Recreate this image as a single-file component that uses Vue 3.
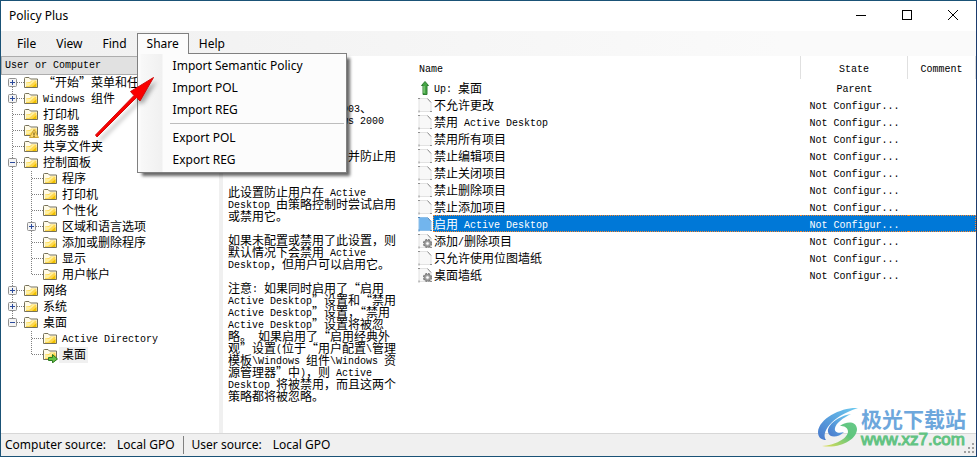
<script setup>
import { h, ref } from 'vue'

// Latin runs are set in a half-width monospace next to full-width CJK glyphs.
const Mixed = (props) =>
  h('span', { class: 'mixed' }, props.text.split(/([\x20-\x7e]+)/).filter(Boolean).map((part) =>
    /^[\x20-\x7e]/.test(part) ? h('span', { class: 'half' }, part) : part))
Mixed.props = ['text']

const menus = ['File', 'View', 'Find', 'Share', 'Help']
const imports = ['Import Semantic Policy', 'Import POL', 'Import REG']
const exportsList = ['Export POL', 'Export REG']

const tree = [
  { d: 0, e: '+', t: '“开始”菜单和任务栏', first: true },
  { d: 0, e: '+', t: 'Windows 组件' },
  { d: 0, t: '打印机' },
  { d: 0, t: '服务器', mark: 'warn' },
  { d: 0, t: '共享文件夹' },
  { d: 0, e: '-', t: '控制面板' },
  { d: 1, t: '程序', rail: true },
  { d: 1, t: '打印机', rail: true },
  { d: 1, t: '个性化', rail: true },
  { d: 1, e: '+', t: '区域和语言选项', rail: true },
  { d: 1, t: '添加或删除程序', rail: true },
  { d: 1, t: '显示', rail: true },
  { d: 1, t: '用户帐户', rail: true, last: true },
  { d: 0, e: '+', t: '网络' },
  { d: 0, e: '+', t: '系统' },
  { d: 0, e: '-', t: '桌面', last: true },
  { d: 1, t: 'Active Directory' },
  { d: 1, t: '桌面', last: true, mark: 'go', sel: true },
]

const description = [
  '仅 Windows Server 2003、',
  'Windows XP 或 Windows 2000',
  '',
  '',
  '启用 Active Desktop 并防止用',
  '',
  '',
  '此设置防止用户在 Active',
  'Desktop 由策略控制时尝试启用',
  '或禁用它。',
  '',
  '如果未配置或禁用了此设置，则',
  '默认情况下会禁用 Active',
  'Desktop，但用户可以启用它。',
  '',
  '注意: 如果同时启用了“启用',
  'Active Desktop”设置和“禁用',
  'Active Desktop”设置，“禁用',
  'Active Desktop”设置将被忽',
  '略。 如果启用了“启用经典外',
  '观”设置(位于“用户配置\\管理',
  '模板\\Windows 组件\\Windows 资',
  '源管理器”中)，则 Active',
  'Desktop 将被禁用，而且这两个',
  '策略都将被忽略。',
]

const nc = 'Not Configur...'
const rows = [
  { t: 'Up: 桌面', s: 'Parent', icon: 'up' },
  { t: '不允许更改', s: nc },
  { t: '禁用 Active Desktop', s: nc },
  { t: '禁用所有项目', s: nc },
  { t: '禁止编辑项目', s: nc },
  { t: '禁止关闭项目', s: nc },
  { t: '禁止删除项目', s: nc },
  { t: '禁止添加项目', s: nc },
  { t: '启用 Active Desktop', s: nc },
  { t: '添加/删除项目', s: nc, icon: 'gear' },
  { t: '只允许使用位图墙纸', s: nc },
  { t: '桌面墙纸', s: nc, icon: 'gear' },
]
const selected = ref(8)
</script>

<template>
  <div class="window">
    <header class="titlebar">
      <span class="title">Policy Plus</span>
      <div class="controls">
        <button type="button" aria-label="Minimize"><svg width="12" height="12"><path d="M1 6.5h10" /></svg></button>
        <button type="button" aria-label="Maximize"><svg width="12" height="12"><path d="M1.5 1.5h9v9h-9z" /></svg></button>
        <button type="button" aria-label="Close"><svg width="12" height="12"><path class="soft" d="M1 1l10 10M11 1L1 11" /></svg></button>
      </div>
    </header>

    <nav class="menubar">
      <div v-for="m in menus" :key="m" class="menu" :class="{ open: m === 'Share' }">
        <button type="button">{{ m }}</button>
        <div v-if="m === 'Share'" class="dropdown">
          <button v-for="i in imports" :key="i" type="button">{{ i }}</button>
          <hr />
          <button v-for="i in exportsList" :key="i" type="button">{{ i }}</button>
          <svg class="pointer" width="72" height="72" viewBox="0 0 72 72">
            <path class="pshadow" d="M9 66 L48 27 L44 21 L67 7 L53 30 L50 28 L11 67z" />
            <path class="parrow" d="M5.500 61 L44 21.500 L40.500 17.500 L63.500 3.500 L50 27 L46.500 23.500 L7 63z" />
          </svg>
        </div>
      </div>
    </nav>

    <main class="panes">
      <section class="side">
        <button class="sidehead" type="button">User or Computer</button>
        <ul class="tree">
          <li v-for="(n, i) in tree" :key="i">
            <svg class="guide" :width="n.d ? 42 : 23" height="16">
              <path v-if="!n.d || n.rail" class="dots" :d="`M11.5 ${n.first ? 8 : 0}V${n.last && !n.d ? 8 : 16}`" />
              <path v-if="n.d" class="dots" :d="`M30.500 0V${n.last ? 8 : 16}`" />
              <path class="dots" :d="n.d ? 'M31 7.5H42' : 'M12 7.5H23'" />
              <g v-if="n.e" :transform="n.d ? 'translate(19 0)' : ''">
                <rect class="box" x="7.5" y="3.5" width="8" height="8" rx="1" />
                <path class="sign" :d="n.e === '+' ? 'M9 7.5h5M11.5 5v5' : 'M9 7.5h5'" />
              </g>
            </svg>
            <svg class="folder" width="16" height="16" viewBox="0 0 16 16">
              <path d="M.5 3.500Q.5 2.500 1.500 2.500H5L6.500 4H13.500V12.500H.5z" fill="#fffbe8" stroke="#77725a" />
              <path d="M2 12V7.500L6 7 7.500 5.500H12.500V12z" fill="#ffd84e" />
              <path d="M2 11V8h4l2-2h3L5 11z" fill="#fff0a0" />
              <path d="M8 12L12.500 8v4z" fill="#efc000" />
              <g v-if="n.mark === 'warn'">
                <path d="M10 6.500L14.500 14.500H5.500z" fill="#ffd96a" stroke="#c9a33a" />
                <path d="M10 9.500v3M10 13v1" stroke="#55420a" />
              </g>
              <path v-if="n.mark === 'go'" d="M5.500 10.500H9.500V7.500L14.500 12 9.500 15.900V13.500H5.500z" fill="#64c246" stroke="#2d7a20" />
            </svg>
            <Mixed class="label" :class="{ sel: n.sel }" :text="n.t" />
          </li>
        </ul>
      </section>

      <div class="splitter"></div>

      <section class="desc">
        <div v-for="(l, i) in description" :key="i" class="line"><Mixed :text="l" /></div>
      </section>

      <section class="list">
        <table>
          <colgroup><col class="c-icon" /><col /><col class="c-state" /><col class="c-comment" /></colgroup>
          <thead>
            <tr>
              <th class="name" colspan="2"><Mixed text="Name" /></th>
              <th><Mixed text="State" /></th>
              <th><Mixed text="Comment" /></th>
            </tr>
          </thead>
          <tbody>
            <tr v-for="(r, i) in rows" :key="i" :class="{ selected: i === selected }" @click="selected = i">
              <td class="icon">
                <svg width="14" height="16" viewBox="0 0 14 16">
                  <path v-if="r.icon === 'up'" d="M7 1.500L10.500 5.500H9V14.500H5V5.500H3.500z" fill="#45a545" stroke="#2f7d32" />
                  <path v-if="r.icon === 'up'" d="M6 6V13" stroke="#9ddc91" />
                  <g v-else>
                    <path d="M1 1.500H9L13 5.500V14.500H1z" :fill="i === selected ? '#72b5ed' : '#f8f8f8'" :stroke="i === selected ? '#8dbfe9' : '#e2e2e2'" />
                    <path d="M0 1.500H2M1 13.500v2M9.500 1.500L13 5.500M12 14.500h2" fill="none" :stroke="i === selected ? '#4e87bb' : '#909090'" />
                  </g>
                  <g v-if="r.icon === 'gear'">
                    <circle cx="9.500" cy="10.500" r="3.800" fill="#bbb" stroke="#777" stroke-width="1.500" stroke-dasharray="2 1" />
                    <circle cx="9.500" cy="10.500" r="3" fill="#aaa" stroke="#888" />
                    <circle cx="9.500" cy="10.500" r="1.300" fill="#fff" />
                  </g>
                </svg>
              </td>
              <td class="name first"><Mixed :text="r.t" /></td>
              <td><Mixed :text="r.s" /></td>
              <td class="end"></td>
            </tr>
          </tbody>
        </table>
      </section>
    </main>

    <footer class="status">
      <div class="pair"><span>Computer source:</span><span>Local GPO</span></div>
      <i class="sep"></i>
      <div class="pair"><span>User source:</span><span>Local GPO</span></div>
      <svg class="grip" width="12" height="12"><path d="M8 0h2v2H8zM4 4h2v2H4zM8 4h2v2H8zM0 8h2v2H0zM4 8h2v2H4zM8 8h2v2H8z" /></svg>
    </footer>

    <div class="watermark">
      <svg width="42" height="42" viewBox="0 0 42 42">
        <defs>
          <linearGradient id="wb" x1="0" y1="1" x2="1" y2="0"><stop offset="0" stop-color="#4878cc" /><stop offset="1" stop-color="#6ccbf0" /></linearGradient>
          <linearGradient id="wg" x1="0" y1="1" x2="1" y2="0"><stop offset="0" stop-color="#e3df58" /><stop offset=".6" stop-color="#5fc57c" /><stop offset="1" stop-color="#68c98a" /></linearGradient>
        </defs>
        <path d="M40 1C24 0 1 11 0 25c0 6 4 8 8 8C3 26 12 10 40 1z" fill="url(#wb)" />
        <path d="M33 7C20 9 9 18 10 25c1 6 10 6 16 0-6 2-10 0-9-4 1-5 8-10 16-14z" fill="url(#wb)" />
        <path d="M22 19c5-4 16-6 17 3 0 10-16 20-35 17 13-1 25-7 26-14 0-5-4-6-8-6z" fill="url(#wg)" />
      </svg>
      <div>
        <div class="wm-name">极光下载站</div>
        <div class="wm-url">www.xz7.com</div>
      </div>
    </div>
  </div>
</template>

<style>
body {
  margin: 0;
}
.mixed {
  font-family: "Noto Sans CJK SC", sans-serif;
  font-size: 12px;
  white-space: pre;
}
.mixed .half {
  font-family: "Liberation Mono", monospace;
  font-size: 10px;
  line-height: 0;
  vertical-align: 1px;
}
</style>

<style scoped>
.window {
  position: relative;
  box-sizing: border-box;
  min-height: 100vh;
  display: flex;
  flex-direction: column;
  background: #fff;
  border: 1px solid #1a5276;
  border-right-color: #1b3c6e;
  color: #000;
  font-family: "Noto Sans", sans-serif;
  font-size: 12px;
}
button {
  font: inherit;
  color: inherit;
  background: none;
  border: 0;
  padding: 0;
  margin: 0;
}
.titlebar {
  display: flex;
  justify-content: space-between;
  height: 30px;
  line-height: 29px;
  padding-left: 8px;
}
.controls {
  display: flex;
}
.controls button {
  width: 46px;
  height: 28px;
  display: grid;
  place-items: center;
}
.controls path {
  fill: none;
  stroke: #000;
  shape-rendering: crispEdges;
}
.controls .soft {
  shape-rendering: auto;
}
.menubar {
  display: flex;
  height: 23px;
  padding: 2px 0 0 6px;
  background: linear-gradient(90deg, #f0f0f0, #fafafa 80%);
}
.menu {
  position: relative;
}
.menu > button {
  height: 21px;
  line-height: 20px;
  padding: 0 9px;
  border: 1px solid transparent;
  border-bottom: 0;
}
.menu.open > button {
  position: relative;
  z-index: 3;
  background: #fcfcfc;
  border-color: #808080;
}
.dropdown {
  position: absolute;
  z-index: 2;
  top: 20px;
  left: 0;
  box-sizing: border-box;
  width: 210px;
  padding: 1px 2px;
  background: linear-gradient(90deg, #fcfcfc 2px, #f8f8f8 3px, #f0f0f0 24px, #fcfcfc 25px);
  border: 1px solid #808080;
  box-shadow: 4px 4px 3px -1px #0009;
}
.dropdown > button {
  display: block;
  width: 100%;
  height: 22px;
  line-height: 22px;
  padding-left: 33px;
  text-align: left;
}
.dropdown hr {
  margin: 2px 0 3px 30px;
  border: 0;
  border-top: 1px solid #bdbdbd;
}
.pointer {
  position: absolute;
  left: -48px;
  top: 20px;
  pointer-events: none;
}
.parrow {
  fill: #fa0000;
  stroke: #d00c0c;
  stroke-width: 1;
}
.pshadow {
  fill: #0005;
  filter: blur(2px);
}
.panes {
  flex: 1;
  display: grid;
  grid-template-columns: 218px 4px 190px 1fr;
  font-family: "Noto Sans CJK SC", sans-serif;
}
.side {
  overflow: hidden;
}
.sidehead {
  display: block;
  box-sizing: border-box;
  width: 100%;
  height: 19px;
  padding-left: 3px;
  text-align: left;
  background: #e1e1e1;
  border: 1px solid #adadad;
  font: 10px/18px "Liberation Mono", monospace;
}
.tree {
  list-style: none;
  margin: 0;
  padding: 0;
}
.tree li {
  display: flex;
  height: 16px;
  line-height: 14px;
}
.guide,
.folder {
  flex: none;
  display: block;
}
.dots {
  fill: none;
  stroke: #808080;
  stroke-dasharray: 1 1;
  shape-rendering: crispEdges;
}
.box {
  fill: #f4f4f4;
  stroke: #919191;
}
.sign {
  stroke: #2b4a9b;
  shape-rendering: crispEdges;
}
.label {
  padding: 0 2px 0 3px;
}
.label.sel {
  background: #f0f0f0;
}
.splitter {
  background: #f0f0f0;
}
.desc {
  padding: 46px 0 0 5px;
}
.line {
  height: 12px;
  line-height: 12px;
}
.list {
  padding-left: 5px;
}
table {
  width: 100%;
  table-layout: fixed;
  border-collapse: separate;
  border-spacing: 0;
}
.c-icon {
  width: 15px;
}
.c-state {
  width: 107px;
}
.c-comment {
  width: 68px;
}
th,
td {
  box-sizing: border-box;
  padding: 0;
  text-align: center;
  font-weight: 400;
  overflow: hidden;
}
th {
  height: 23px;
  line-height: 20px;
  border-right: 1px solid #e0e0e0;
}
td {
  height: 17px;
  line-height: 14px;
  border: 0 dotted transparent;
  border-width: 1px 0;
}
.name {
  text-align: left;
  padding-left: 1px;
}
.icon {
  border: 0;
}
.icon svg {
  display: block;
}
.selected td:not(.icon) {
  color: #fff;
  background: #0078d7;
  border-color: #ff8728;
}
.selected .end {
  border-right-width: 1px;
}
.selected .first {
  border-left-width: 1px;
  padding-left: 0;
}
.status {
  display: flex;
  gap: 8px;
  height: 22px;
  line-height: 21px;
  padding-left: 4px;
  background: #f0f0f0;
  border-top: 1px solid #d7d7d7;
}
.pair {
  display: flex;
  gap: 11px;
}
.sep {
  width: 1px;
  margin: 2px 0;
  background: #808080;
}
.grip {
  margin: 9px 0 0 auto;
  fill: #a0a0a0;
}
.watermark {
  position: absolute;
  right: 10px;
  bottom: 6px;
  display: flex;
  align-items: center;
  gap: 1px;
  pointer-events: none;
}
.wm-name {
  font: 700 21px/24px "Noto Sans CJK SC", sans-serif;
  color: #6da7dc;
}
.wm-url {
  font: 17px/20px "Liberation Sans", sans-serif;
  color: #62c383;
  -webkit-text-stroke: 1px #62c383;
}
</style>
